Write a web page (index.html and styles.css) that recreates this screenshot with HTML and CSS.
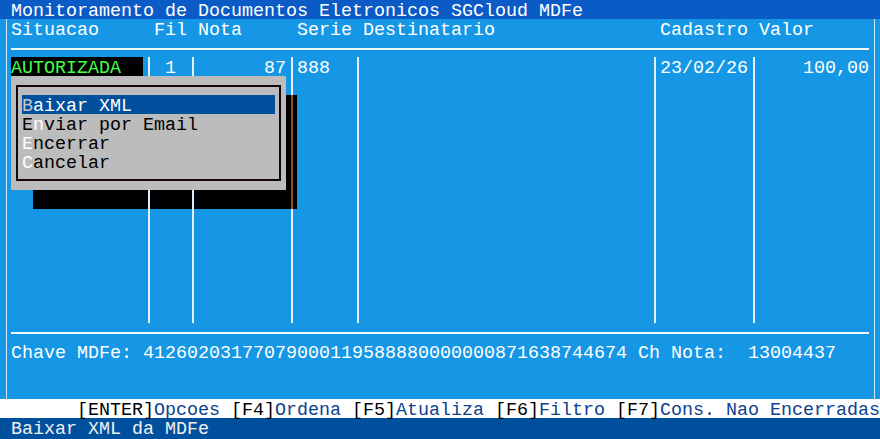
FILE: index.html
```html
<!DOCTYPE html>
<html lang="pt">
<head>
<meta charset="utf-8">
<title>Monitoramento MDFe</title>
<link rel="stylesheet" href="styles.css">
</head>
<body>
<div class="screen">
  <div class="row title">Monitoramento de Documentos Eletronicos SGCloud MDFe</div>
  <div class="frame">
    <div class="row head">Situacao     Fil Nota     Serie Destinatario               Cadastro Valor</div>
    <div class="rule"></div>
    <div class="tbody">
      <div class="col w12"><div class="row sit">AUTORIZADA  </div></div>
      <div class="bar"></div>
      <div class="col w3"><div class="row"> 1 </div></div>
      <div class="bar"></div>
      <div class="col w8"><div class="row right">87</div></div>
      <div class="bar"></div>
      <div class="col w5"><div class="row">888</div></div>
      <div class="bar"></div>
      <div class="col w26"><div class="row"></div></div>
      <div class="bar"></div>
      <div class="col w8"><div class="row">23/02/26</div></div>
      <div class="bar"></div>
      <div class="col w10"><div class="row right">100,00</div></div>
    </div>
    <div class="rule rule-b"></div>
    <div class="row">Chave MDFe: 41260203177079000119588880000000871638744674 Ch Nota:  13004437</div>
    <div class="row"></div>
    <div class="row"></div>
  </div>
  <div class="row footer"><span class="key">[ENTER]</span><span class="lbl">Opcoes </span><span class="key">[F4]</span><span class="lbl">Ordena </span><span class="key">[F5]</span><span class="lbl">Atualiza </span><span class="key">[F6]</span><span class="lbl">Filtro </span><span class="key">[F7]</span><span class="lbl">Cons. Nao Encerradas</span></div>
  <div class="row status">Baixar XML da MDFe</div>

  <div class="menu-shadow">
    <div class="sh-line sh-a"></div>
    <div class="sh-line sh-b"></div>
    <div class="sh-line sh-c"></div>
  </div>
  <div class="menu">
    <div class="menu-box">
      <div class="row item active"><span class="hk-sel">B</span>aixar XML</div>
      <div class="row item">E<span class="hk">n</span>viar por Email</div>
      <div class="row item"><span class="hk">E</span>ncerrar</div>
      <div class="row item"><span class="hk">C</span>ancelar</div>
    </div>
  </div>
</div>
</body>
</html>
```
FILE: styles.css
```css
* { box-sizing: border-box; }
html, body { margin: 0; padding: 0; }
body {
  background: #1597e6;
  font-family: "Liberation Mono", "DejaVu Sans Mono", monospace;
  font-size: 18.33px;
  color: #ffffff;
}
.screen {
  position: relative;
  width: 880px;
  height: 439px;
  overflow: hidden;
  background: #1597e6;
}
.row {
  height: 19px;
  line-height: 19px;
  padding-top: 2px;
  white-space: pre;
}
.title {
  background: #0a5bc6;
  padding-left: 11px;
}
.frame {
  margin: 0 5px 0 6px;
  border-left: 1px solid #cfe7f8;
  border-right: 1px solid #cfe7f8;
  padding-left: 4px;
}
.rule {
  height: 19px;
  width: 858px;
  padding-top: 10px;
}
.rule::before {
  content: "";
  display: block;
  height: 2px;
  background: #f2f9ff;
}
.rule-b { padding-top: 9px; }
.tbody {
  display: flex;
  height: 266px;
}
.col { height: 100%; }
.w3 { width: 33px; }
.w5 { width: 55px; }
.w8 { width: 88px; }
.w10 { width: 110px; }
.w12 { width: 132px; }
.w26 { width: 286px; }
.right { text-align: right; }
.sit {
  background: #000000;
  color: #45ff45;
}
.bar {
  width: 11px;
  height: 100%;
  padding-left: 5px;
}
.bar::before {
  content: "";
  display: block;
  width: 2px;
  height: 100%;
  background: #e4f2fc;
}
.footer {
  background: #ffffff;
  padding-left: 77px;
}
.key { color: #000000; }
.lbl { color: #0d4190; }
.status {
  background: #00509d;
  color: #f0f0f0;
  padding-left: 11px;
  height: 21px;
}
.menu-shadow {
  position: absolute;
  left: 33px;
  top: 95px;
  width: 264px;
  height: 114px;
  background: #000000;
}
.sh-line {
  position: absolute;
  top: 0;
  width: 2px;
  height: 100%;
  background: #d8ecfa;
}
.sh-a { left: 115px; }
.sh-b { left: 159px; }
.sh-c { left: 258px; background: #8a4f1c; }
.menu {
  position: absolute;
  left: 11px;
  top: 76px;
  width: 275px;
  height: 114px;
  background: #bcbcbc;
  padding: 9px 0 0 5px;
}
.menu-box {
  width: 265px;
  height: 96px;
  border: 2px solid #120410;
  padding: 8px 4px 0 4px;
}
.item {
  width: 253px;
  color: #000000;
}
.item.active {
  background: #00509d;
  color: #ffffff;
}
.hk { color: #ffffff; }
.hk-sel { color: #c8c8c8; }
```
